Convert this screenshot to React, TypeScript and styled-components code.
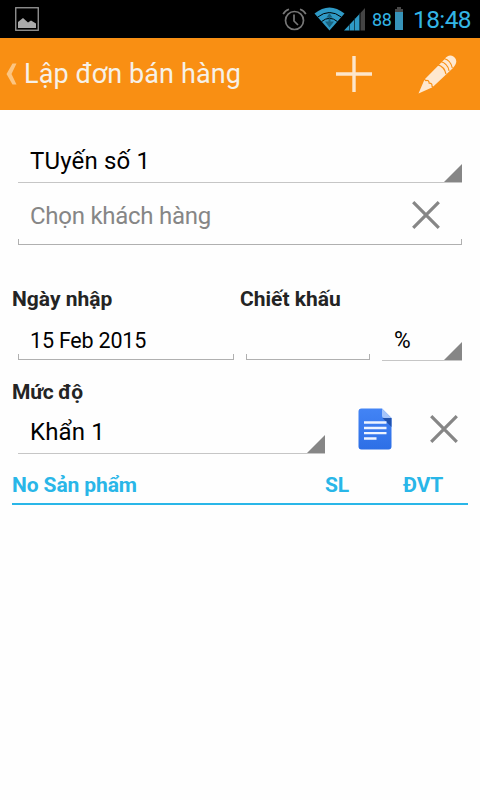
import React from "react";
import styled, { createGlobalStyle } from "styled-components";

const Global = createGlobalStyle`
  *, *::before, *::after { box-sizing: border-box; }
  body { margin: 0; background: #fefefe; font-family: Roboto, "Noto Sans", sans-serif; }
  svg { display: block; flex: none; }
`;

const Screen = styled.div`
  width: 480px;
  height: 800px;
  overflow: hidden;
  display: flex;
  flex-direction: column;
  background: #fefefe;
`;

const StatusBar = styled.header`
  height: 38px;
  flex: none;
  display: flex;
  align-items: center;
  padding: 0 9px 0 15px;
  background: #000;
  color: #33b5e5;
`;

const StatusIcons = styled.div`
  flex: 1;
  display: flex;
  justify-content: flex-end;

  > :first-child {
    margin: 1px 7px 0 0;
  }

  > :last-child {
    margin-left: -1px;
  }
`;

const BatteryLevel = styled.span`
  width: 20px;
  margin: 2px 3px 0 6px;
  font-size: 18px;
  line-height: 20px;
  letter-spacing: -0.4px;
`;

const Clock = styled.time`
  width: 58px;
  margin: 2px 0 0 10px;
  font-size: 24.5px;
  line-height: 28px;
  letter-spacing: -0.6px;
  white-space: nowrap;
`;

const ActionBar = styled.nav`
  height: 72px;
  flex: none;
  display: flex;
  align-items: center;
  padding: 0 23px 0 6px;
  background: #f98f13;
`;

const Title = styled.h1`
  flex: 1;
  margin: 0 0 0 7px;
  font-size: 27px;
  line-height: 30px;
  font-weight: 400;
  letter-spacing: 0.1px;
  color: #f6f1e8;
  white-space: nowrap;
`;

const Actions = styled.div`
  display: flex;
  align-items: center;
  gap: 46px;
`;

const IconButton = styled.button`
  display: flex;
  padding: 0;
  border: 0;
  background: none;
`;

const Form = styled.main`
  display: flex;
  flex-direction: column;
  padding: 28px 12px 0;
`;

const Spinner = styled.div<{ $width: number; $height: number; $size?: number }>`
  width: ${(p) => p.$width}px;
  height: ${(p) => p.$height}px;
  flex: none;
  display: flex;
  align-items: flex-end;
  justify-content: space-between;
  padding-left: 12px;
  border-bottom: 1px solid #c6c6c6;
  font-size: ${(p) => p.$size ?? 24}px;
  letter-spacing: 0.15px;
  color: #000;
  white-space: nowrap;

  > span {
    line-height: 28px;
    margin-bottom: 7px;
  }
`;

const UnitSpinner = styled(Spinner)`
  > span {
    margin-bottom: 6px;
    transform: scaleX(0.95);
    transform-origin: left;
  }
`;

const Corner = styled.i`
  width: 18px;
  height: 18px;
  background: #868686;
  clip-path: polygon(100% 0, 100% 100%, 0 100%);
`;

const Field = styled.div<{ $width: number; $height: number }>`
  width: ${(p) => p.$width}px;
  height: ${(p) => p.$height}px;
  flex: none;
  display: flex;
  align-items: center;
  justify-content: space-between;
  padding: 10px 22px 0 12px;
  background:
    linear-gradient(#b0b0b0, #b0b0b0) left bottom / 100% 1px no-repeat,
    linear-gradient(#b0b0b0, #b0b0b0) left bottom / 1px 6px no-repeat,
    linear-gradient(#b0b0b0, #b0b0b0) right bottom / 1px 6px no-repeat;
  font-size: 21.5px;
  line-height: 28px;
  letter-spacing: -0.2px;
  color: #000;
  white-space: nowrap;
`;

const CustomerField = styled(Field)`
  padding-top: 2px;
  font-size: 24px;
  letter-spacing: -0.27px;
  color: #868686;

  > span {
    margin-top: 2px;
  }
`;

const Inset = styled.div`
  padding: 0 6px;
`;

const Labels = styled.div<{ $top: number; $tracking?: number }>`
  display: grid;
  grid-template-columns: 228px 1fr;
  margin-top: ${(p) => p.$top}px;
  font-size: 21px;
  line-height: 26px;
  font-weight: 700;
  letter-spacing: ${(p) => p.$tracking ?? 0}px;
  color: #242424;
`;

const FieldRow = styled.div`
  display: flex;
  gap: 12px;
  align-items: flex-start;
  padding: 0 6px;
`;

const PriorityRow = styled.div`
  height: 49px;
  display: flex;
  align-items: flex-start;
  padding-left: 6px;
`;

const NoteButton = styled(IconButton)`
  margin: 3px 0 0 33px;
`;

const ClearButton = styled(IconButton)`
  margin: 10px 0 0 38px;
`;

const TableHead = styled.div`
  height: 51px;
  display: grid;
  grid-template-columns: 313px 78px 1fr;
  align-items: end;
  padding-bottom: 5px;
  border-bottom: 2px solid #29b6e8;
  font-size: 21px;
  line-height: 26px;
  font-weight: 700;
  letter-spacing: -0.1px;
  color: #29b6e8;
`;

const PictureIcon = () => (
  <svg width="24" height="24" viewBox="0 0 24 24">
    <rect x=".75" y=".75" width="22.5" height="22.5" fill="none" stroke="#999" strokeWidth="1.3" />
    <path d="M3 21v-6l5-4 5 4.500 3-2 5 3V21z" fill="#aaa" />
  </svg>
);

const AlarmIcon = () => (
  <svg width="25" height="24" viewBox="0 0 25 24" fill="none" stroke="#777" strokeWidth="1.700">
    <circle cx="12.500" cy="12.500" r="9" />
    <path d="M12 6.500v6.500l4 4M1.200 6.200Q3 2.500 7 1.200M18 1.200Q22 2.500 23.800 6.200" />
  </svg>
);

const WifiIcon = () => (
  <svg width="31" height="24" viewBox="0 0 31 24">
    <path d="M.5 6.500Q15.500-5.500 30.500 6.500L15.500 23.500z" fill="#2f9ac6" />
    <path d="M3.500 10.200Q15.500.8 27.500 10.200M7.500 14.600Q15.500 8 23.500 14.600" fill="none" stroke="#000" strokeWidth="1" />
    <path d="M15.500 6l3 4.500h-2v4h3.500l-4.500 6-4.500-6h3.500v-4h-2z" fill="#104b63" opacity=".7" />
  </svg>
);

const SignalIcon = () => (
  <svg width="22" height="24" viewBox="0 0 22 24">
    <path d="M0 23.500L16 6.500v17z" fill="#2f9ac6" />
    <path d="M16.500 6L21 1v22.500h-4.500z" fill="#444" />
    <path d="M5.500 17v7M10.500 11v13M15.500 6v18" stroke="#08222d" strokeWidth=".7" />
  </svg>
);

const BatteryIcon = () => (
  <svg width="8" height="24" viewBox="0 0 8 24">
    <path d="M2 0h4v2h2v3H0V2h2z" fill="#484848" />
    <path d="M0 5h8v18H0z" fill="#3793b9" />
  </svg>
);

const BackIcon = () => (
  <svg width="11" height="22" viewBox="0 0 11 22">
    <path d="M6.500.5h4L5.500 11l5 10.500h-4L.5 11z" fill="#fcc581" />
  </svg>
);

const PlusIcon = () => (
  <svg width="36" height="36" viewBox="0 0 36 36">
    <path d="M18 0v36M0 18h36" stroke="#fde6cb" strokeWidth="3.400" />
  </svg>
);

const PencilIcon = () => (
  <svg width="39" height="39" viewBox="0 0 39 39">
    <path
      d="M.5 38.500L6.500 24.500 26.500 4.200Q30-.5 34 .8 38 2.500 38.300 6.500 38.200 9.500 34.500 13.500L14.500 32.200z"
      fill="#fee8d0"
    />
    <path
      d="M6 23.800l1.800 1.800q3.200-1 3.400 2.600 3.200-.2 2.800 3l1.800 1.800M19.500 9.700q7 2 8.500 9.500M22.800 6.500q7 2 8.300 9.300M26 3.500q6.800 1.800 8.300 9.500"
      fill="none"
      stroke="#f98f13"
      strokeWidth="1.200"
    />
  </svg>
);

const CrossIcon = () => (
  <svg width="28" height="28" viewBox="0 0 28 28">
    <path d="M1.200 1.200l25.600 25.600M26.800 1.200L1.200 26.800" stroke="#868686" strokeWidth="3.200" />
  </svg>
);

const DocumentIcon = () => (
  <svg width="34" height="42" viewBox="0 0 34 42">
    <defs>
      <linearGradient id="sheet" x1="0" y1="0" x2="0" y2="1">
        <stop offset="0" stopColor="#4384f5" />
        <stop offset="1" stopColor="#2d6fe6" />
      </linearGradient>
    </defs>
    <path d="M3 .5h21L33.500 10v28.500q0 3-3 3H3.500q-3 0-3-3v-35q0-3 3-3z" fill="url(#sheet)" />
    <path d="M24.500 10h9v9z" fill="#2052ae" />
    <path d="M24 .5L33.500 10H26q-2 0-2-2z" fill="#a5c5fb" />
    <path d="M6 14.500h22.500M6 20h22.500M6 25.200h22.500M6 30.500h12.500" stroke="#eef4ff" strokeWidth="2.300" />
  </svg>
);

export default function App() {
  return (
    <>
      <Global />
      <Screen>
        <StatusBar>
          <PictureIcon />
          <StatusIcons>
            <AlarmIcon />
            <WifiIcon />
            <SignalIcon />
          </StatusIcons>
          <BatteryLevel>88</BatteryLevel>
          <BatteryIcon />
          <Clock>18:48</Clock>
        </StatusBar>
        <ActionBar>
          <BackIcon />
          <Title>Lập đơn bán hàng</Title>
          <Actions>
            <IconButton aria-label="Thêm"><PlusIcon /></IconButton>
            <IconButton aria-label="Sửa"><PencilIcon /></IconButton>
          </Actions>
        </ActionBar>
        <Form>
          <Inset>
            <Spinner $width={444} $height={45}>
              <span>TUyến số 1</span>
              <Corner />
            </Spinner>
            <CustomerField $width={444} $height={62}>
              <span>Chọn khách hàng</span>
              <CrossIcon />
            </CustomerField>
          </Inset>
          <Labels $top={41}>
            <span>Ngày nhập</span>
            <span>Chiết khấu</span>
          </Labels>
          <FieldRow>
            <Field $width={216} $height={48}>15 Feb 2015</Field>
            <Field $width={124} $height={48} />
            <UnitSpinner $width={80} $height={49} $size={24}>
              <span>%</span>
              <Corner />
            </UnitSpinner>
          </FieldRow>
          <Labels $top={18} $tracking={-0.25}>
            <span>Mức độ</span>
          </Labels>
          <PriorityRow>
            <Spinner $width={307} $height={49}>
              <span>Khẩn 1</span>
              <Corner />
            </Spinner>
            <NoteButton aria-label="Ghi chú"><DocumentIcon /></NoteButton>
            <ClearButton aria-label="Xóa"><CrossIcon /></ClearButton>
          </PriorityRow>
          <TableHead>
            <span>No Sản phẩm</span>
            <span>SL</span>
            <span>ĐVT</span>
          </TableHead>
        </Form>
      </Screen>
    </>
  );
}
